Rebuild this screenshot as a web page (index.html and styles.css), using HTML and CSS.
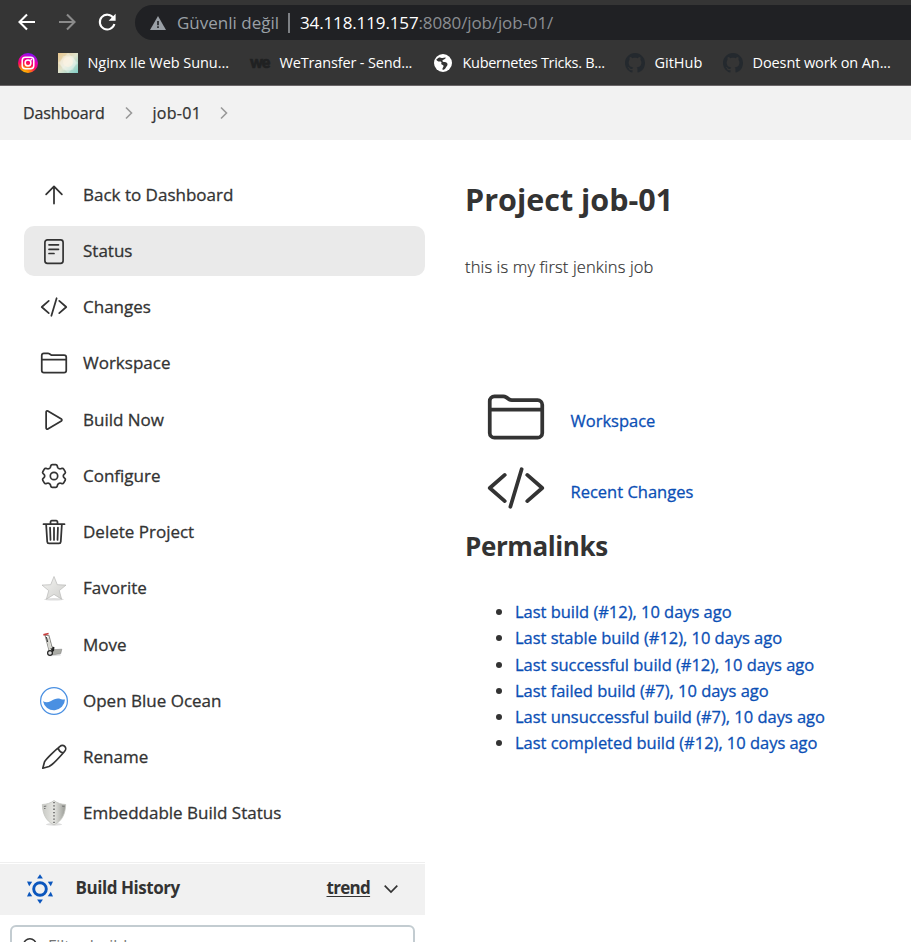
FILE: index.html
```html
<!DOCTYPE html>
<html lang="en">
<head>
<meta charset="utf-8">
<title>job-01 [Jenkins]</title>
<link rel="stylesheet" href="styles.css">
</head>
<body>
<svg width="0" height="0" class="defs" aria-hidden="true">
  <defs>
    <symbol id="code" viewBox="0 0 512 512"><path d="M160 368L32 256l128-112M352 368l128-112-128-112M304 96l-96 320"/></symbol>
    <symbol id="folder" viewBox="0 0 512 512"><path d="M440 432H72a40 40 0 01-40-40V120a40 40 0 0140-40h75.890a40 40 0 0122.190 6.720l27.840 18.560a40 40 0 0022.190 6.720H440a40 40 0 0140 40v240a40 40 0 01-40 40zM32 192h448"/></symbol>
    <symbol id="github" viewBox="0 0 16 16"><path d="M8 0C3.580 0 0 3.580 0 8c0 3.540 2.290 6.530 5.470 7.590.4.070.55-.17.55-.38 0-.19-.01-.82-.01-1.490-2.010.37-2.530-.49-2.690-.94-.09-.23-.48-.94-.82-1.130-.28-.15-.68-.52-.01-.53.63-.01 1.080.58 1.230.82.72 1.210 1.870.87 2.330.66.070-.52.28-.87.51-1.070-1.780-.2-3.640-.89-3.640-3.950 0-.87.31-1.590.82-2.150-.08-.2-.36-1.020.08-2.120 0 0 .67-.21 2.200.82.64-.18 1.320-.27 2-.27s1.360.09 2 .27c1.530-1.040 2.200-.82 2.200-.82.44 1.100.16 1.920.08 2.120.51.56.82 1.270.82 2.150 0 3.070-1.870 3.750-3.650 3.950.29.25.54.73.54 1.480 0 1.070-.01 1.930-.01 2.200 0 .21.15.46.55.38A8.010 8.010 0 0016 8c0-4.420-3.580-8-8-8z"/></symbol>
    <linearGradient id="silver" x1="0" y1="0" x2="1" y2="1"><stop offset="0" stop-color="#f4f4f2"/><stop offset="1" stop-color="#cfcfcc"/></linearGradient>
    <linearGradient id="steel" x1="0" y1="0" x2="1" y2="0"><stop offset="0" stop-color="#c9cac5"/><stop offset=".5" stop-color="#e6e6e2"/><stop offset="1" stop-color="#989a94"/></linearGradient>
    <radialGradient id="insta" cx=".3" cy="1.05" r="1.1"><stop offset="0" stop-color="#ffd000"/><stop offset=".3" stop-color="#ff7a10"/><stop offset=".55" stop-color="#fc0560"/><stop offset=".75" stop-color="#e400b0"/><stop offset="1" stop-color="#7a10ff"/></radialGradient>
    <linearGradient id="mosaic" x1="0" y1="0" x2="1" y2="1"><stop offset="0" stop-color="#e9c68d"/><stop offset=".5" stop-color="#dfe3cd"/><stop offset="1" stop-color="#7fcdc6"/></linearGradient>
  </defs>
</svg>

<header class="browser">
  <div class="toolbar">
    <svg class="nav" viewBox="0 0 20 20"><path d="M18 10H3M10 2.500L2.500 10l7.500 7.500"/></svg>
    <svg class="nav nav-off" viewBox="0 0 20 20"><path d="M2 10h15M10 2.500l7.500 7.500-7.500 7.500"/></svg>
    <svg class="nav" viewBox="0 0 20 20"><path d="M16.300 5.800A7.400 7.400 0 1 0 17.400 12"/><path class="solid" d="M18.600 1.700v7h-7z"/></svg>
    <div class="address">
      <svg class="warn" viewBox="0 0 16 14"><path d="M8 0l8 14H0z" fill="#9aa0a6"/><path d="M7.200 5h1.600v4.200H7.200zM7.200 10.300h1.600v1.600H7.200z" fill="#202124"/></svg>
      <span class="insecure">Güvenli değil</span>
      <span class="bar"></span>
      <span class="url"><b>34.118.119.157</b>:8080/job/job-01/</span>
    </div>
  </div>
  <nav class="bookmarks">
    <span class="mark"><svg viewBox="0 0 20 20"><circle cx="10" cy="10" r="10" fill="url(#insta)"/><g fill="none" stroke="#fff" stroke-width="1.500"><rect x="4.200" y="4.200" width="11.600" height="11.600" rx="3.200"/><circle cx="10" cy="10" r="2.900"/></g><circle cx="13.300" cy="6.700" r=".9" fill="#fff"/></svg></span>
    <span class="mark"><svg viewBox="0 0 20 20"><path d="M0 0h20v20H0z" fill="url(#mosaic)"/><path d="M10 0l10 10-10 10L0 10z" fill="#fff" opacity=".3"/><path d="M5 3h10l3 7-3 7H5l-3-7z" fill="#fff" opacity=".25"/><circle cx="10" cy="9" r="5" fill="#fff3e2" opacity=".6"/></svg><span class="label m1">Nginx Ile Web Sunu...</span></span>
    <span class="mark"><span class="we">we</span><span class="label m2">WeTransfer - Send...</span></span>
    <span class="mark"><svg viewBox="0 0 20 20"><circle cx="10" cy="10" r="9" fill="#fff"/><path d="M6 4.500c1.500 0 2.500.6 3.600.5 1.200-.1 1.900-.6 3.100-.4-.1 1.500-1.400 1.900-2.700 2.500-1.100.6-.8 1.700.6 1.900 2.100.1 3.600.3 3.900 2.100.2 1.900-1.200 2.400-1.900 3.800-.6 1.100-1.400 1.700-2.900 1.800-.5-.6-.3-1.300.3-2.200.7-1 .9-2.200-.3-2.500-1.300-.3-1.800-.9-1.300-1.900.4-1-.2-1.500-1.700-1.500-1.500.1-2.700-.5-3.400-2z" fill="#353535"/></svg><span class="label m3">Kubernetes Tricks. B...</span></span>
    <span class="mark"><svg class="octo"><use href="#github"/></svg><span class="label">GitHub</span></span>
    <span class="mark"><svg class="octo"><use href="#github"/></svg><span class="label m5">Doesnt work on An...</span></span>
  </nav>
</header>

<div class="crumbs">
  <span class="c1">Dashboard</span>
  <svg class="sep" viewBox="0 0 10 14"><path d="M2 1.500L7.500 7 2 12.500"/></svg>
  <span class="c2">job-01</span>
  <svg class="sep" viewBox="0 0 10 14"><path d="M2 1.500L7.500 7 2 12.500"/></svg>
</div>

<div class="page">
  <aside class="side">
    <nav class="tasks">
      <a class="task"><svg class="ion" viewBox="0 0 512 512"><path d="M112 244l144-144 144 144M256 120v292"/></svg><span>Back to Dashboard</span></a>
      <a class="task active"><svg class="line" viewBox="0 0 28 28"><rect x="4.900" y="2.900" width="18.200" height="23.400" rx="2.500"/><path d="M9 7.800h9.500M9 12.300h9.500M9 16.500h5"/></svg><span>Status</span></a>
      <a class="task"><svg class="ion"><use href="#code"/></svg><span>Changes</span></a>
      <a class="task"><svg class="ion"><use href="#folder"/></svg><span>Workspace</span></a>
      <a class="task"><svg class="ion" viewBox="0 0 512 512"><path d="M112 111v290c0 17.440 17 28.520 31 20.160l247.900-148.370c12.120-7.250 12.120-26.330 0-33.580L143 90.840c-14-8.360-31 2.720-31 20.160z"/></svg><span>Build Now</span></a>
      <a class="task"><svg class="line" viewBox="0 0 28 28"><path d="M12.200 2.600h3.600q1.100 0 1.400 1.100l.4 1.500q.3.900 1.200 1.400t1.900.2l1.300-.4q1.100-.3 1.700.7l1.500 2.600q.6 1-.3 1.800l-.9.900q-.7.700-.7 1.600t.7 1.600l.9.900q.9.800.3 1.800l-1.500 2.600q-.6 1-1.700.7l-1.300-.4q-1-.3-1.900.2t-1.200 1.400l-.4 1.500q-.3 1.100-1.400 1.100h-3.600q-1.100 0-1.400-1.100l-.4-1.500q-.3-.9-1.200-1.400t-1.900-.2l-1.300.4q-1.100.3-1.700-.7l-1.500-2.600q-.6-1 .3-1.800l.9-.9q.7-.7.7-1.600t-.7-1.600l-.9-.9q-.9-.8-.3-1.800l1.500-2.600q.6-1 1.700-.7l1.300.4q1 .3 1.900-.2t1.200-1.400l.4-1.500q.3-1.100 1.400-1.100z"/><circle cx="14" cy="14" r="3.700"/></svg><span>Configure</span></a>
      <a class="task"><svg class="ion" viewBox="0 0 512 512"><path d="M112 112l20 320c.95 18.490 14.400 32 32 32h184c17.670 0 30.870-13.510 32-32l20-320M64 112h384M192 112V72a23.930 23.930 0 0124-24h80a23.930 23.930 0 0124 24v40M256 176v224M184 176l8 224M328 176l-8 224"/></svg><span>Delete Project</span></a>
      <a class="task"><svg viewBox="0 0 28 28"><ellipse cx="14" cy="25.300" rx="10" ry="1.200" fill="#ddd"/><path d="M14 2.500l3.300 8.200 8.700.4-6.700 5.500 2.300 8.600L14 20.400l-7.600 4.800 2.300-8.600L2 11.100l8.700-.4z" fill="url(#silver)" stroke="#b9b9b7" stroke-width=".7"/></svg><span>Favorite</span></a>
      <a class="task"><svg viewBox="0 0 28 28"><path d="M8 25.600l13-1-1-1.600z" fill="#ddd"/><path d="M5 4l4 .8 4 15M5 4l4.500 17" fill="none" stroke="#8c8c88" stroke-width="1.100"/><path d="M6.300 7l2.200-.8 4 14-3 .7z" fill="#d8d8d2"/><path d="M6.300 6l1.400 5M11 17l1.500 4" stroke="#333" stroke-width="1"/><path d="M3.400 3.900l3-.8M6 3.300l2.600-.8" stroke="#c63c3c" stroke-width="1.700"/><path d="M12.500 18.700l9.300-.5-1 4.300-8.300 1.500z" fill="#aaaba5" stroke="#777" stroke-width=".5"/><path d="M12.500 15.500l2 .8-.5 3.700-2.500 1.500z" fill="#222"/><circle cx="10" cy="22" r="2.400" fill="#ddd" stroke="#222" stroke-width="1.200"/></svg><span>Move</span></a>
      <a class="task"><svg viewBox="0 0 28 28"><circle cx="14" cy="14" r="13.400" fill="#fff" stroke="#4a90e2" stroke-width="1.200"/><path d="M3 14.200c2.700 1.500 5.100 1.500 8-.3 3.200-2 6.400-3 9.400-2 1.500.5 3 .8 4.600.7A11.100 11.100 0 0 1 3 14.200z" fill="#4a90e2"/></svg><span>Open Blue Ocean</span></a>
      <a class="task"><svg class="line" viewBox="0 0 28 28"><path d="M2.800 25.200l1.700-6.300C6 15.800 15.500 7 20 3.400a3.300 3.300 0 0 1 4.700 4.800C21 12.500 12.200 22 9 23.500zM18.300 4.800c.3 2.700 2 4.500 4.900 5"/></svg><span>Rename</span></a>
      <a class="task"><svg viewBox="0 0 28 28"><ellipse cx="14" cy="25.400" rx="8" ry="1.300" fill="#ddd"/><path d="M14 1.500c3.500 2.800 7.500 3.800 11.700 4C25.300 14.500 22.500 22 14 25.800 5.500 22 2.700 14.500 2.300 5.500c4.200-.2 8.200-1.200 11.700-4z" fill="url(#steel)" stroke="#c4c5c0" stroke-width=".8"/><path d="M14 3v22" stroke="#666" stroke-width="1.600" stroke-dasharray="1.300 2"/><path d="M3.800 7.500c1-.3 1.700-.4 2.500-.4M4 9.500h1.500M22 7.100l2.500.4" stroke="#777" stroke-width="1"/></svg><span>Embeddable Build Status</span></a>
    </nav>
    <section class="history">
      <div class="history-head">
        <svg class="sun" viewBox="0 0 28 30"><circle cx="14" cy="15" r="6.300" fill="none" stroke="#0b56bd" stroke-width="2.900"/><g fill="#0b56bd"><path d="M14 .3l2.900 4.300h-5.800z"/><path d="M14 29.700l2.900-4.300h-5.800z"/><path d="M1 7.500l5.200.2-3 4.500z"/><path d="M27 7.500l-5.200.2 3 4.500z"/><path d="M1 22.500l5.200-.2-3-4.500z"/><path d="M27 22.500l-5.200-.2 3-4.500z"/></g></svg>
        <strong class="history-title">Build History</strong>
        <a class="trend">trend</a>
        <svg class="chev" viewBox="0 0 16 10"><path d="M1.700 1.700L8 8l6.300-6.300"/></svg>
      </div>
      <div class="filter"><svg class="mag" viewBox="0 0 16 16"><circle cx="7" cy="7" r="5.500"/><path d="M11 11l4 4"/></svg><span>Filter builds...</span></div>
    </section>
  </aside>

  <main class="main">
    <h1>Project job-01</h1>
    <p class="about">this is my first jenkins job</p>
    <div class="links">
      <a class="big"><svg><use href="#folder"/></svg><span>Workspace</span></a>
      <a class="big"><svg><use href="#code"/></svg><span>Recent Changes</span></a>
    </div>
    <h2>Permalinks</h2>
    <ul class="perma">
      <li><a>Last build (#12), 10 days ago</a></li>
      <li><a>Last stable build (#12), 10 days ago</a></li>
      <li><a>Last successful build (#12), 10 days ago</a></li>
      <li><a>Last failed build (#7), 10 days ago</a></li>
      <li><a>Last unsuccessful build (#7), 10 days ago</a></li>
      <li><a>Last completed build (#12), 10 days ago</a></li>
    </ul>
  </main>
</div>
</body>
</html>
```
FILE: styles.css
```css
* { box-sizing: border-box; }
body {
  margin: 0;
  height: 942px;
  overflow: hidden;
  background: #fff;
  color: #333;
  font-family: "Open Sans", "Noto Sans", sans-serif;
  font-size: 17px;
}
svg { flex: none; display: block; }
span, a, strong { white-space: nowrap; }
.defs { position: absolute; }

.browser { height: 86px; background: #353535; border-bottom: 1px solid #6a6668; overflow: hidden; }
.toolbar { display: flex; align-items: center; height: 40px; padding: 5px 0 0 17px; }
.nav { width: 20px; height: 20px; margin: -2px 20px 0 0; fill: none; stroke: #fff; stroke-width: 2.1; }
.nav-off { stroke: #8b8b8b; }
.nav .solid { fill: #fff; stroke: none; }
.address {
  flex: 1; display: flex; align-items: center; height: 35px; margin-left: -2px;
  padding-left: 15px; background: #202124; border-radius: 18px 0 0 18px; font-size: 17px;
}
.warn { width: 16px; height: 14px; margin-right: 11px; }
.insecure { width: 111px; color: #9aa0a6; }
.bar { width: 2px; height: 20px; background: #7d8084; }
.url { margin-left: 10px; color: #8b8e92; letter-spacing: -.13px; }
.url b { font-weight: 400; color: #fff; }

.bookmarks {
  display: grid; grid-template-columns: 40px 192px 183px 192px 98px 200px;
  padding-left: 18px; height: 46px; align-items: center; color: #fff; font-size: 14.500px;
}
.mark { display: flex; align-items: center; }
.mark svg, .we { width: 20px; height: 20px; margin-right: 9.500px; }
.label { margin-top: -2px; }
.m1 { letter-spacing: -.05px; }
.m2 { letter-spacing: -.15px; }
.m3 { letter-spacing: -.3px; }
.m5 { letter-spacing: -.1px; }
.we { font: 900 16px/18px Lato, sans-serif; color: #202122; letter-spacing: -1px; -webkit-text-stroke: .7px #202122; }
.mark .octo { fill: #24292e; }

.crumbs { display: flex; align-items: center; height: 54px; padding-left: 23px; background: #f2f2f2; font-size: 16px; -webkit-text-stroke: .25px #333; }
.sep { width: 10px; height: 14px; fill: none; stroke: #999; stroke-width: 1.600; }
.c1 { width: 101px; letter-spacing: -.1px; }
.c2 { width: 56px; margin-left: 18.500px; letter-spacing: .3px; }
.c2 + .sep { margin-left: 10.500px; }

.page { display: flex; }
.side { width: 425px; }
.tasks { display: grid; gap: 6.270px; padding: 30px 0 0 24px; }
.task { display: flex; align-items: center; gap: 15px; height: 50px; padding-left: 16px; border-radius: 10px; font-size: 17px; }
.task span { margin-top: -2px; -webkit-text-stroke: .3px #333; }
.task.active { background: #eaeaea; }
.task svg { width: 28px; height: 28px; margin-top: -1px; }
.ion { fill: none; stroke: #333; stroke-width: 32; stroke-linecap: round; stroke-linejoin: round; }
.line { fill: none; stroke: #333; stroke-width: 1.700; stroke-linecap: round; stroke-linejoin: round; }

.history { margin-top: 23px; border-top: 1px solid #efefef; padding-top: 1px; }
.history-head { display: flex; align-items: center; height: 51px; padding-left: 26px; background: #f1f1f1; }
.sun { width: 28px; height: 30px; }
.history-title { width: 251px; margin: -4px 0 0 21.500px; font-weight: 700; letter-spacing: -.45px; }
.trend { width: 56px; margin-top: -4px; font-weight: 700; text-decoration: underline; text-underline-offset: 2px; letter-spacing: -.7px; }
.chev { width: 16px; height: 10px; fill: none; stroke: #333; stroke-width: 1.700; }
.filter {
  display: flex; align-items: center; height: 42px; margin: 10px 10px 0; padding-left: 10px;
  border: 2px solid #c3ccd1; border-radius: 6px; color: #757575; font-size: 16px;
}
.mag { width: 18px; height: 18px; margin-right: 8px; fill: none; stroke: #333; stroke-width: 1.400; }

.main { padding-left: 40px; }
h1 { margin: 36px 0 0; font-size: 30.500px; line-height: 46px; font-weight: 700; }
.about { margin: 33px 0 0; font-size: 16.500px; line-height: 24px; font-weight: 300; letter-spacing: .13px; -webkit-text-stroke: .2px #333; }
.links { margin-top: 102px; padding-left: 21px; }
.big { display: flex; align-items: center; gap: 24.500px; height: 71px; color: #0b4fb5; font-size: 16.500px; }
.big svg { width: 60px; height: 60px; fill: none; stroke: #333; stroke-width: 32; stroke-linecap: round; stroke-linejoin: round; }
.big span { padding-top: 7px; -webkit-text-stroke: .3px #0b4fb5; }
h2 { margin: 4px 0 0; font-size: 26px; line-height: 38px; font-weight: 700; letter-spacing: -.4px; }
.perma { margin: 34px 0 0; padding-left: 50px; font-size: 16.500px; line-height: 26.250px; }
.perma a { color: #0b4fb5; letter-spacing: -.03px; -webkit-text-stroke: .3px #0b4fb5; }
```
